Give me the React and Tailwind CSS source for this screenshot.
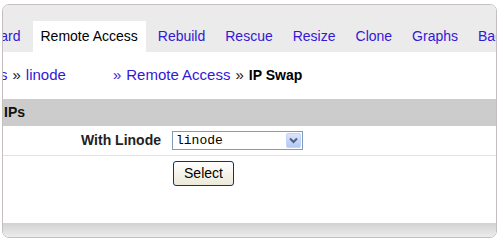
export default function App() {
  const tabs = ['Dashboard', 'Remote Access', 'Rebuild', 'Rescue', 'Resize', 'Clone', 'Graphs', 'Backups'];

  return (
    <div className="w-[500px] h-[240px] bg-white pt-[4px] pl-[2px] overflow-hidden font-['Liberation_Sans',Arial,sans-serif]">
      <div className="relative w-[495px] h-[234px] border border-[#c5bebe] rounded-[7px] overflow-hidden bg-white flex flex-col">
        {/* Tabs */}
        <div className="h-[47px] bg-[#ebebeb] pt-[16px] shrink-0">
          <div className="flex gap-[4px] ml-[-59px] whitespace-nowrap">
            {tabs.map((t) => (
              <div
                key={t}
                className={
                  t === 'Remote Access'
                    ? 'h-[31px] px-[8px] bg-white text-[14px] leading-[31px] text-black'
                    : 'h-[31px] px-[8px] text-[14px] leading-[31px] text-[#3318d6]'
                }
              >
                {t}
              </div>
            ))}
          </div>
        </div>

        {/* Breadcrumb */}
        <div className="h-[47px] shrink-0 flex items-center ml-[-3px] whitespace-nowrap text-[15px] text-[#111]">
          <span className="text-[#3318d6]">s</span>
          <span className="mx-[5px]">»</span>
          <span className="text-[#3318d6]">linode</span>
          <span className="inline-block w-[47px]" />
          <span className="text-[#3318d6]">»</span>
          <span className="ml-[5px] text-[#3318d6]">Remote Access</span>
          <span className="mx-[5px]">»</span>
          <span className="font-bold text-black text-[14px]">IP Swap</span>
        </div>

        {/* Section header */}
        <div className="h-[27px] shrink-0 bg-[#cccccc] flex items-center pl-[1px] text-[14px] font-bold text-[#111]">
          IPs
        </div>

        {/* Row */}
        <div className="h-[30px] shrink-0 flex items-center border-b border-[#e3e3e3]">
          <div className="w-[158px] text-right text-[14px] font-bold text-[#222]">With Linode</div>
          <div className="ml-[11px] w-[131px] h-[19px] border border-[#7f9db9] bg-white flex items-center">
            <span className="flex-1 pl-[3px] text-[13px] leading-none font-['Liberation_Mono',monospace] text-black">linode</span>
            <div className="w-[15px] h-[15px] mr-[1px] rounded-[2px] bg-gradient-to-b from-[#dbe5fb] to-[#b3c8f5] border border-[#c3d3fd] flex items-center justify-center">
              <svg width="9" height="7" viewBox="0 0 9 7">
                <path d="M1 1.5 L4.5 5 L8 1.5" fill="none" stroke="#4d6185" strokeWidth="2" />
              </svg>
            </div>
          </div>
        </div>

        {/* Button row */}
        <div className="pt-[5px] pl-[170px] shrink-0">
          <button className="w-[61px] h-[25px] rounded-[3px] border border-[#003c74] bg-gradient-to-b from-white to-[#ece9d8] text-[14px] text-black">
            Select
          </button>
        </div>

        <div className="flex-1" />

        {/* Bottom strip */}
        <div className="h-[14px] shrink-0 bg-gradient-to-b from-[#d2d2d2] to-[#ececec]" />
      </div>
    </div>
  );
}
